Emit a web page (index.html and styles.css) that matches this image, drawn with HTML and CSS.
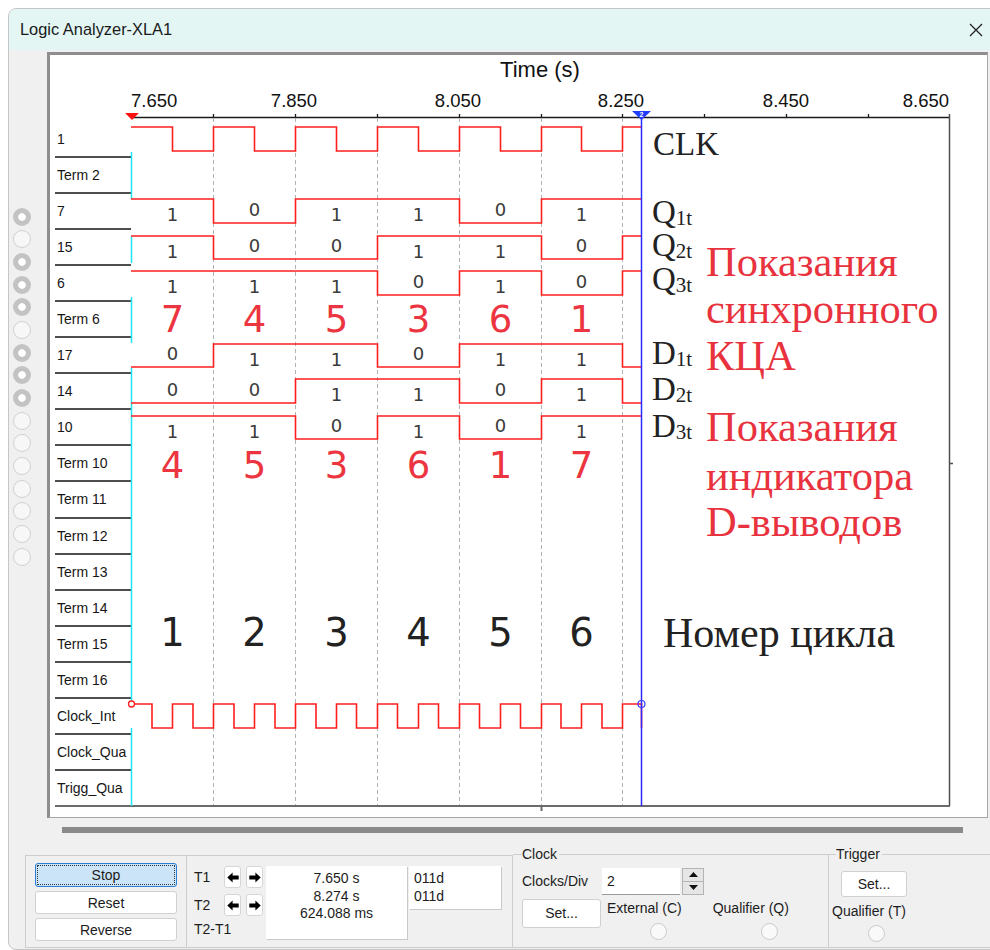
FILE: index.html
```html
<!DOCTYPE html>
<html lang="ru">
<head>
<meta charset="utf-8">
<title>Logic Analyzer-XLA1</title>
<link rel="stylesheet" href="styles.css">
</head>
<body>
<div class="window">
  <div class="titlebar">
    <span class="title">Logic Analyzer-XLA1</span>
    <svg class="close" width="14" height="14" viewBox="0 0 14 14"><path d="M1 1L13 13M13 1L1 13"/></svg>
  </div>

  <div class="main">
    <div class="probes">
      <span class="probe on"></span><span class="probe"></span><span class="probe on"></span><span class="probe on"></span>
      <span class="probe on"></span><span class="probe"></span><span class="probe on"></span><span class="probe on"></span>
      <span class="probe on"></span><span class="probe"></span><span class="probe"></span><span class="probe"></span>
      <span class="probe"></span><span class="probe"></span><span class="probe"></span><span class="probe"></span>
    </div>

    <div class="frame">
      <div class="labels">
        <div class="lbl">1</div>
        <div class="lbl">Term 2</div>
        <div class="lbl">7</div>
        <div class="lbl">15</div>
        <div class="lbl">6</div>
        <div class="lbl">Term 6</div>
        <div class="lbl">17</div>
        <div class="lbl">14</div>
        <div class="lbl">10</div>
        <div class="lbl">Term 10</div>
        <div class="lbl">Term 11</div>
        <div class="lbl">Term 12</div>
        <div class="lbl">Term 13</div>
        <div class="lbl">Term 14</div>
        <div class="lbl">Term 15</div>
        <div class="lbl">Term 16</div>
        <div class="lbl">Clock_Int</div>
        <div class="lbl">Clock_Qua</div>
        <div class="lbl">Trigg_Qua</div>
      </div>

      <svg class="plot" width="856" height="762" viewBox="131 55 856 762">
        <!-- time axis -->
        <text class="axis-title" x="540" y="77" text-anchor="middle">Time (s)</text>
        <text class="tick" x="131" y="107">7.650</text>
        <text class="tick" x="294" y="107" text-anchor="middle">7.850</text>
        <text class="tick" x="458" y="107" text-anchor="middle">8.050</text>
        <text class="tick" x="621" y="107" text-anchor="middle">8.250</text>
        <text class="tick" x="786" y="107" text-anchor="middle">8.450</text>
        <text class="tick" x="949" y="107" text-anchor="end">8.650</text>
        <path class="axis" d="M131 117.5H949.5M213.5 114V117M295.5 114V117M377.5 114V117M459.5 114V117M541.5 114V117M622.5 114V117M704.5 114V117M786.5 114V117M868.5 114V117"/>
        <path class="edge" d="M949.5 114V806M949.5 463.5H953"/>

        <!-- division grid -->
        <path class="grid" d="M213.5 118V805M295.5 118V805M377.5 118V805M459.5 118V805M541.5 118V805M622.5 118V805"/>
        <path class="base" d="M131 806H950M541.5 806V811"/>

        <!-- T1 column -->
        <path class="t1col" d="M131.5 152V199M131.5 236V263M131.5 297V343M131.5 368V703M131.5 728V806"/>

        <!-- signals -->
        <g class="wave">
          <path d="M131 127H172.5V151H213.5V127H254.5V151H295.5V127H336.5V151H377.5V127H418.5V151H459.5V127H500.5V151H541.5V127H581.5V151H622.5V127H641.5"/>
          <path d="M131 199H213.5V223H295.5V199H459.5V223H541.5V199H641.5"/>
          <path d="M131 236H213.5V259H377.5V236H541.5V259H622.5V236H641.5"/>
          <path d="M131 271H377.5V295H459.5V271H541.5V295H622.5V271H641.5"/>
          <path d="M131 367H213.5V344H377.5V367H459.5V344H622.5V367H641.5"/>
          <path d="M131 403H295.5V379H459.5V403H541.5V379H622.5V403H641.5"/>
          <path d="M131 416H295.5V439H377.5V416H459.5V439H541.5V416H641.5"/>
          <path d="M131 704H152V728H172.5V704H193V728H213.5V704H234V728H254.5V704H275V728H295.5V704H316V728H336.5V704H356.5V728H377.5V704H397.5V728H418.5V704H438.5V728H459.5V704H479.5V728H500.5V704H520.5V728H541.5V704H561V728H581.5V704H602V728H622.5V704H641.5V728"/>
        </g>

        <!-- cursors -->
        <path class="t2" d="M641.5 117V806"/>
        <polygon class="t1mark" points="125,113 139,113 132,120"/>
        <polygon class="t2mark" points="632,111 651,111 641.5,120"/>
        <text class="t2num" x="641.5" y="117" text-anchor="middle">2</text>
        <circle class="t1dot" cx="131.5" cy="704" r="3"/>
        <circle class="t2dot" cx="641.5" cy="704" r="3.5"/>

        <!-- bit values -->
        <g class="bits" text-anchor="middle">
          <text x="172.5" y="221">1</text><text x="254.5" y="216">0</text><text x="336.5" y="221">1</text><text x="418.5" y="221">1</text><text x="500.5" y="216">0</text><text x="581.5" y="221">1</text>
          <text x="172.5" y="257.5">1</text><text x="254.5" y="251.5">0</text><text x="336.5" y="251.5">0</text><text x="418.5" y="257.5">1</text><text x="500.5" y="257.5">1</text><text x="581.5" y="251.5">0</text>
          <text x="172.5" y="292.5">1</text><text x="254.5" y="292.5">1</text><text x="336.5" y="292.5">1</text><text x="418.5" y="287.5">0</text><text x="500.5" y="292.5">1</text><text x="581.5" y="287.5">0</text>
          <text x="172.5" y="359.5">0</text><text x="254.5" y="365.5">1</text><text x="336.5" y="365.5">1</text><text x="418.5" y="359.5">0</text><text x="500.5" y="365.5">1</text><text x="581.5" y="365.5">1</text>
          <text x="172.5" y="395.5">0</text><text x="254.5" y="395.5">0</text><text x="336.5" y="400.5">1</text><text x="418.5" y="400.5">1</text><text x="500.5" y="395.5">0</text><text x="581.5" y="400.5">1</text>
          <text x="172.5" y="437.5">1</text><text x="254.5" y="437.5">1</text><text x="336.5" y="431.5">0</text><text x="418.5" y="437.5">1</text><text x="500.5" y="431.5">0</text><text x="581.5" y="437.5">1</text>
        </g>

        <!-- decoded states -->
        <g class="state" text-anchor="middle">
          <text x="172.5" y="331.5">7</text><text x="254.5" y="331.5">4</text><text x="336.5" y="331.5">5</text><text x="418.5" y="331.5">3</text><text x="500.5" y="331.5">6</text><text x="581.5" y="331.5">1</text>
          <text x="172.5" y="477.5">4</text><text x="254.5" y="477.5">5</text><text x="336.5" y="477.5">3</text><text x="418.5" y="477.5">6</text><text x="500.5" y="477.5">1</text><text x="581.5" y="477.5">7</text>
        </g>
        <g class="cycle" text-anchor="middle">
          <text x="172.5" y="646">1</text><text x="254.5" y="646">2</text><text x="336.5" y="646">3</text><text x="418.5" y="646">4</text><text x="500.5" y="646">5</text><text x="581.5" y="646">6</text>
        </g>

        <!-- signal names -->
        <g class="names">
          <text x="653" y="155">CLK</text>
          <text x="652" y="223">Q<tspan class="sub" dy="2">1t</tspan></text>
          <text x="652" y="256">Q<tspan class="sub" dy="2">2t</tspan></text>
          <text x="652" y="290">Q<tspan class="sub" dy="2">3t</tspan></text>
          <text x="652" y="364">D<tspan class="sub" dy="2">1t</tspan></text>
          <text x="652" y="400">D<tspan class="sub" dy="2">2t</tspan></text>
          <text x="652" y="437">D<tspan class="sub" dy="2">3t</tspan></text>
        </g>
        <g class="notes">
          <text x="706" y="276">Показания</text>
          <text x="706" y="323">синхронного</text>
          <text x="706" y="370">КЦА</text>
          <text x="706" y="441">Показания</text>
          <text x="706" y="490">индикатора</text>
          <text x="706" y="536">D-выводов</text>
        </g>
        <text class="cycle-title" x="663" y="647">Номер цикла</text>
      </svg>
    </div>
  </div>

  <div class="scroll"><div class="scroll-thumb"></div></div>

  <div class="panel">
    <div class="run-box">
      <div class="run-buttons">
        <button class="btn btn-run focus">Stop</button>
        <button class="btn btn-run">Reset</button>
        <button class="btn btn-run">Reverse</button>
      </div>
      <div class="cursors">
        <span class="c-lbl r1">T1</span>
        <span class="arrow-btn r1 c2"><svg width="12" height="11" viewBox="0 0 12 11"><path d="M0.3 5.5L5.6 0.4V3.6H11.7V7.4H5.6V10.6Z"/></svg></span>
        <span class="arrow-btn r1 c3"><svg width="12" height="11" viewBox="0 0 12 11"><path d="M11.7 5.5L6.4 0.4V3.6H0.3V7.4H6.4V10.6Z"/></svg></span>
        <span class="c-lbl r2">T2</span>
        <span class="arrow-btn r2 c2"><svg width="12" height="11" viewBox="0 0 12 11"><path d="M0.3 5.5L5.6 0.4V3.6H11.7V7.4H5.6V10.6Z"/></svg></span>
        <span class="arrow-btn r2 c3"><svg width="12" height="11" viewBox="0 0 12 11"><path d="M11.7 5.5L6.4 0.4V3.6H0.3V7.4H6.4V10.6Z"/></svg></span>
        <span class="c-lbl r3">T2-T1</span>
        <div class="readout times">
          <div>7.650 s</div>
          <div>8.274 s</div>
          <div>624.088 ms</div>
        </div>
        <div class="readout words">
          <div>011d</div>
          <div>011d</div>
        </div>
      </div>
    </div>

    <fieldset class="group clock">
      <legend>Clock</legend>
      <div class="clock-row">
        <span class="clock-lbl">Clocks/Div</span>
        <span class="num-input">2</span>
        <span class="spin">
          <span class="spin-half"><svg width="9" height="5" viewBox="0 0 9 5"><path d="M0 5L4.5 0L9 5Z"/></svg></span>
          <span class="spin-half"><svg width="9" height="5" viewBox="0 0 9 5"><path d="M0 0L4.5 5L9 0Z"/></svg></span>
        </span>
      </div>
      <div class="clock-row2">
        <button class="btn btn-set">Set...</button>
        <div class="option opt-ext">
          <span>External (C)</span>
          <span class="radio"></span>
        </div>
        <div class="option opt-q">
          <span>Qualifier (Q)</span>
          <span class="radio"></span>
        </div>
      </div>
    </fieldset>

    <fieldset class="group trigger">
      <legend>Trigger</legend>
      <button class="btn btn-tset">Set...</button>
      <div class="option opt-t">
        <span>Qualifier (T)</span>
        <span class="radio"></span>
      </div>
    </fieldset>
  </div>
</div>
</body>
</html>
```

FILE: styles.css
```css
html, body {
  margin: 0;
  padding: 0;
  width: 990px;
  height: 950px;
  overflow: hidden;
  background: #ffffff;
}

.window {
  box-sizing: border-box;
  margin: 8px 0 0 8px;
  width: 1000px;
  height: 942px;
  border: 1px solid #c6c6c6;
  border-radius: 8px;
  background: #f0f0f0;
  overflow: hidden;
  font-family: "Liberation Sans", Arial, sans-serif;
  color: #1c1c1c;
}

/* title bar */
.titlebar {
  height: 41px;
  background: #e3f6f4;
  display: flex;
  align-items: center;
  justify-content: space-between;
  padding: 0 24px 0 11px;
}
.title {
  font-size: 16.4px;
  color: #1a1a1a;
}
.close path {
  stroke: #222;
  stroke-width: 1.3;
  fill: none;
}

/* probe column + waveform frame */
.main {
  display: flex;
  height: 768px;
  padding-top: 2px;
  box-sizing: border-box;
}
.probes {
  width: 38px;
  flex: none;
  box-sizing: border-box;
  padding: 155.5px 0 0 4px;
  display: flex;
  flex-direction: column;
  gap: 4.7px;
}
.probe {
  display: block;
  width: 18px;
  height: 18px;
  box-sizing: border-box;
  border-radius: 50%;
  background: #f7f7f7;
  border: 1px solid #d0d0d0;
}
.probe.on {
  border: none;
  background: radial-gradient(circle, #ffffff 0 3.4px, #c3c3c3 4.2px);
}

.frame {
  box-sizing: border-box;
  flex: none;
  width: 941px;
  height: 766px;
  background: #ffffff;
  border-style: solid;
  border-width: 3px 1px 1px 3px;
  border-color: #8e8e8e #a6a6a6 #a6a6a6 #8e8e8e;
  display: flex;
}
.labels {
  width: 81px;
  flex: none;
  box-sizing: border-box;
  padding: 67px 0 0 5px;
  display: flex;
  flex-direction: column;
}
.lbl {
  height: 36.05px;
  flex: none;
  box-sizing: border-box;
  border-bottom: 2px solid #4e4e4e;
  display: flex;
  align-items: center;
  padding-left: 2px;
  font-size: 14px;
  color: #161616;
}
.lbl:last-child {
  border-bottom-color: #6b6b6b;
}

.plot {
  display: block;
  overflow: visible;
  flex: none;
}
.axis-title {
  font: 22px "Liberation Sans", Arial, sans-serif;
  fill: #111;
}
.tick {
  font: 18.5px "Liberation Sans", Arial, sans-serif;
  fill: #111;
}
.axis {
  stroke: #1c1c1c;
  stroke-width: 1.3;
  fill: none;
}
.edge {
  stroke: #4f4f4f;
  stroke-width: 1.5;
  fill: none;
}
.grid {
  stroke: #b2b2b2;
  stroke-width: 1;
  stroke-dasharray: 4 3;
  fill: none;
}
.base {
  stroke: #6b6b6b;
  stroke-width: 2;
  fill: none;
}
.t1col {
  stroke: #1ee6f2;
  stroke-width: 1.5;
  fill: none;
}
.wave path {
  stroke: #ff1e1e;
  stroke-width: 1.6;
  fill: none;
}
.t2 {
  stroke: #2a2aff;
  stroke-width: 1.5;
  fill: none;
}
.t1mark { fill: #ff1010; }
.t2mark { fill: #1f3cff; }
.t2num {
  font: bold 7px "Liberation Sans", Arial, sans-serif;
  fill: #ffffff;
}
.t1dot {
  fill: #ffffff;
  stroke: #ff2020;
  stroke-width: 1.3;
}
.t2dot {
  fill: none;
  stroke: #3a3aff;
  stroke-width: 1.2;
}

.bits text {
  font: 18px "DejaVu Sans", sans-serif;
  fill: #3a3a3a;
}
.state text {
  font: 37px "DejaVu Sans", sans-serif;
  fill: #ec3540;
}
.cycle text {
  font: 38.5px "DejaVu Sans", sans-serif;
  fill: #222222;
}
.names text {
  font: 33px "Liberation Serif", "Times New Roman", serif;
  fill: #222222;
}
.names .sub {
  font-size: 21px;
}
.notes text {
  font: 42.5px "Liberation Serif", "Times New Roman", serif;
  fill: #e8333e;
}
.cycle-title {
  font: 42px "Liberation Serif", "Times New Roman", serif;
  fill: #222222;
}

/* horizontal scroller */
.scroll {
  height: 28px;
  padding: 9px 0 0 53px;
  box-sizing: border-box;
}
.scroll-thumb {
  width: 901px;
  height: 6px;
  background: #8a8a8a;
}

/* control panel */
.panel {
  display: flex;
  align-items: flex-start;
  padding-left: 16px;
  height: 103px;
  font-size: 14px;
}
.panel > * {
  flex: none;
}
.run-box {
  box-sizing: border-box;
  margin-top: 9px;
  width: 488px;
  height: 93px;
  border: 1px solid #cdcdcd;
  display: flex;
}
.run-buttons {
  box-sizing: border-box;
  width: 161px;
  flex: none;
  border-right: 1px solid #cdcdcd;
  padding: 7px 0 0 9px;
  display: flex;
  flex-direction: column;
  gap: 4px;
}
.btn {
  font: 14px "Liberation Sans", Arial, sans-serif;
  color: #1c1c1c;
  background: #ffffff;
  border: 1px solid #d0d0d0;
  border-radius: 3px;
  padding: 0;
  box-sizing: border-box;
}
.btn-run {
  width: 142px;
  height: 23px;
}
.btn-run.focus {
  height: 24px;
  background: #cce4f7;
  border-color: #2b7fd4;
  outline: 1px dotted #333;
  outline-offset: -3px;
}

.cursors {
  display: grid;
  grid-template-columns: 30px 22px 20px 143px 92px;
  grid-template-rows: 22px 28px 26px;
  padding: 10px 0 0 7px;
}
.c-lbl {
  grid-column: 1;
  align-self: center;
  white-space: nowrap;
}
.r1 { grid-row: 1; }
.r2 { grid-row: 2; }
.r3 { grid-row: 3; }
.c-lbl.r2 { align-self: end; line-height: 22px; }
.c2 { grid-column: 2; }
.c3 { grid-column: 3; }
.arrow-btn {
  width: 17px;
  height: 22px;
  box-sizing: border-box;
  background: #ffffff;
  border: 1px solid #d6d6d6;
  border-radius: 3px;
  display: flex;
  align-items: center;
  justify-content: center;
}
.arrow-btn.r2 { align-self: end; }
.arrow-btn path { fill: #000; }

.readout {
  background: #ffffff;
  box-shadow: 1px 1px 0 #c9c9c9;
  line-height: 17.5px;
  padding-top: 4px;
  box-sizing: border-box;
}
.times {
  grid-column: 4;
  grid-row: 1 / 4;
  width: 141px;
  height: 73px;
  text-align: center;
}
.words {
  grid-column: 5;
  grid-row: 1 / 3;
  width: 92px;
  height: 43px;
  padding-left: 5px;
  align-self: start;
}

.group {
  box-sizing: border-box;
  margin: 0;
  min-width: 0;
  height: 101.5px;
  border: 1px solid #cdcdcd;
  border-left: none;
}
.group legend {
  padding: 0 2px 0 0;
  line-height: 17px;
  font-size: 14px;
}
.clock {
  width: 316px;
  padding: 0 0 0 9px;
}
.trigger {
  width: 200px;
  padding: 0 0 0 7px;
  border-right: none;
}

.clock-row {
  display: flex;
  align-items: center;
  margin-top: 4.5px;
  height: 27px;
}
.clock-lbl {
  width: 80px;
  flex: none;
}
.num-input {
  box-sizing: border-box;
  width: 78px;
  height: 27px;
  background: #ffffff;
  border-bottom: 1px solid #9a9a9a;
  padding: 0 0 0 5px;
  line-height: 27px;
  margin-right: 2px;
}
.spin {
  box-sizing: border-box;
  width: 22px;
  height: 27px;
  border: 1px solid #b4b4b4;
  background: #e6e6e6;
  display: flex;
  flex-direction: column;
}
.spin-half {
  flex: 1;
  display: flex;
  align-items: center;
  justify-content: center;
}
.spin-half + .spin-half { border-top: 1px solid #b4b4b4; }
.spin path { fill: #111; }

.clock-row2 {
  display: flex;
  margin-top: 4px;
}
.btn-set {
  width: 79px;
  height: 29px;
  flex: none;
}
.option {
  display: flex;
  flex-direction: column;
  line-height: 18px;
  white-space: nowrap;
}
.radio {
  display: block;
  width: 17px;
  height: 17px;
  box-sizing: border-box;
  border-radius: 50%;
  border: 1px solid #c9c9c9;
  background: #f9f9f9;
  margin-top: 6px;
}
.opt-ext { margin-left: 6px; }
.opt-ext .radio { margin-left: 43px; }
.opt-q { margin-left: 31px; }
.opt-q .radio { margin-left: 48px; }

.btn-tset {
  display: block;
  width: 66px;
  height: 26px;
  margin: 8px 0 0 5px;
}
.opt-t { margin: 5px 0 0 -4px; }
.opt-t .radio { margin: 5px 0 0 36px; }
```
